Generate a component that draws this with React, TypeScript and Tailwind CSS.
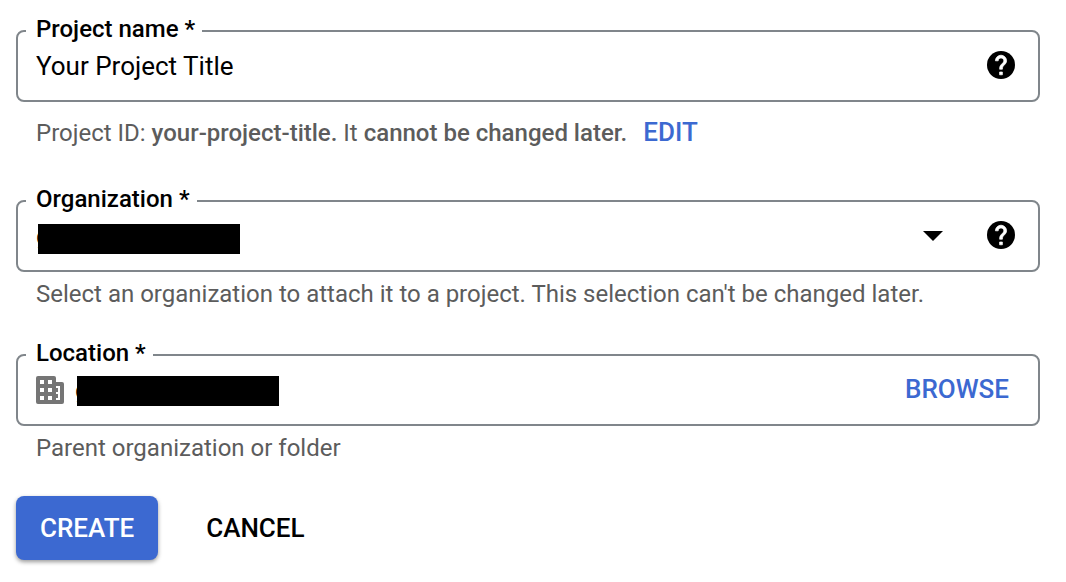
import { useState } from "react";
import type { ReactNode } from "react";

type FieldProps = {
  id: string;
  label: string;
  children: ReactNode;
};

function Field({ id, label, children }: FieldProps) {
  return (
    <fieldset className="min-w-0 rounded-lg border-2 border-[#80868b] px-2 pb-[13px]">
      <legend className="pr-[7px] pb-1 pl-[10px] text-2xl leading-6 font-medium">
        <label htmlFor={id} className="block">
          {label} *
        </label>
      </legend>
      <div className="flex h-[42px] items-center pr-3 pl-[10px]">{children}</div>
    </fieldset>
  );
}

function HelpButton({ label }: { label: string }) {
  return (
    <button type="button" aria-label={label} className="mr-[3px] ml-[27px] shrink-0 pb-0.5">
      <svg width="28" height="28" viewBox="2 2 20 20" className="block" aria-hidden="true">
        <circle cx="12" cy="12" r="10" />
        <path
          fill="#fff"
          stroke="#fff"
          strokeWidth="0.5"
          d="M13 19h-2v-2h2zM15.07 11.25l-.9.92C13.45 12.9 13 13.5 13 15h-2v-.5c0-1.1.45-2.1 1.17-2.83l1.24-1.26c.37-.36.59-.86.59-1.41 0-1.1-.9-2-2-2s-2 .9-2 2H8c0-2.21 1.79-4 4-4s4 1.79 4 4c0 .88-.36 1.68-.93 2.25z"
        />
      </svg>
    </button>
  );
}

function BuildingIcon() {
  return (
    <svg width="28" height="28" viewBox="0 0 28 28" className="shrink-0" aria-hidden="true">
      <path
        fill="#757575"
        fillRule="evenodd"
        d="M2 0h16a2 2 0 0 1 2 2v4h6a2 2 0 0 1 2 2v18a2 2 0 0 1-2 2H2a2 2 0 0 1-2-2V2a2 2 0 0 1 2-2zM4 4v4h4V4zM12 4v4h4V4zM4 12v4h4v-4zM12 12v4h4v-4zM4 20v4h4v-4zM12 20v4h4v-4zM20 10v2h2v4h-2v2h2v4h-2v2h4V10z"
      />
    </svg>
  );
}

export default function App() {
  const [name, setName] = useState("Your Project Title");

  return (
    <form
      className="bg-white pt-[17px] pr-[26px] pb-5 pl-4 font-[Roboto,sans-serif] text-black"
      onSubmit={(event) => event.preventDefault()}
    >
      <Field id="project-name" label="Project name">
        <input
          id="project-name"
          value={name}
          onChange={(event) => setName(event.target.value)}
          className="h-10 min-w-0 flex-1 text-[26px] outline-none"
        />
        <HelpButton label="Help for project name" />
      </Field>
      <div className="mt-4 flex items-start gap-4 pl-5 text-2xl leading-[30px] text-[#5c5c5c]">
        <p>
          Project ID: <span className="font-medium">your-project-title.</span> It{" "}
          <span className="font-medium">cannot be changed later.</span>
        </p>
        <button type="button" className="text-[26px] leading-7 font-medium text-[#3c69d1]">
          EDIT
        </button>
      </div>

      <div className="mt-[39px]">
        <Field id="organization" label="Organization">
          <div className="relative flex h-10 min-w-0 flex-1 items-center">
            <select id="organization" className="h-10 w-full appearance-none text-[26px] outline-none">
              <option>g</option>
            </select>
            <span className="pointer-events-none absolute top-2 left-0.5 h-[30px] w-[202px] bg-black" />
            <svg
              width="20"
              height="10"
              viewBox="0 0 20 10"
              className="pointer-events-none absolute right-[17px]"
              aria-hidden="true"
            >
              <path d="M0 0h20L10 10z" />
            </svg>
          </div>
          <HelpButton label="Help for organization" />
        </Field>
        <p className="mt-2 pl-5 text-2xl leading-7 text-[#5c5c5c]">
          Select an organization to attach it to a project. This selection can't be changed later.
        </p>
      </div>

      <div className="mt-[33px]">
        <Field id="location" label="Location">
          <BuildingIcon />
          <div className="relative ml-[11px] flex h-10 min-w-0 flex-1 items-center">
            <input id="location" readOnly value="g" className="h-10 w-full text-[26px] outline-none" />
            <span className="pointer-events-none absolute top-1.5 left-0.5 h-[30px] w-[202px] bg-black" />
          </div>
          <button type="button" className="mr-[9px] ml-6 pb-0.5 text-[26px] font-medium text-[#3c69d1]">
            BROWSE
          </button>
        </Field>
        <p className="mt-2 pl-5 text-2xl leading-7 text-[#5c5c5c]">Parent organization or folder</p>
      </div>

      <div className="mt-[34px] flex gap-6">
        <button
          type="submit"
          className="h-16 rounded-lg bg-[#3c69d1] px-6 text-[26px] font-medium text-white shadow-[0_2px_4px_rgba(0,0,0,0.4)]"
        >
          CREATE
        </button>
        <button type="button" className="h-16 px-6 text-[26px] font-medium">
          CANCEL
        </button>
      </div>
    </form>
  );
}
